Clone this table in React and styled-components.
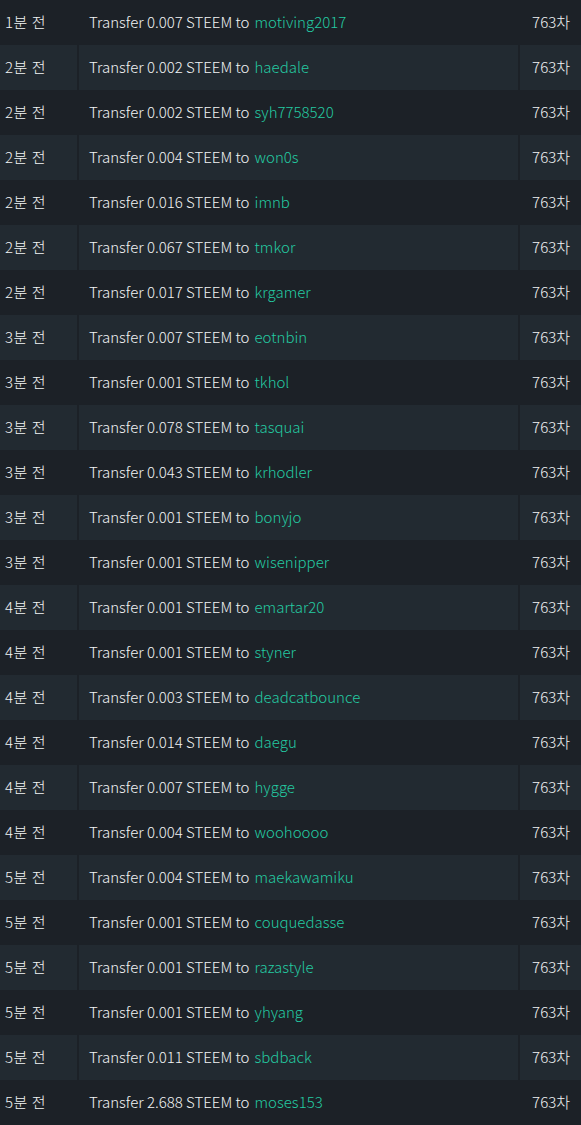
import React from "react";
import styled, { createGlobalStyle } from "styled-components";

const GlobalStyle = createGlobalStyle`
  body {
    margin: 0;
    background: #1c2127;
    font-family: "Noto Sans CJK KR", "Noto Sans", sans-serif;
  }
`;

const Table = styled.div`
  width: 581px;
  display: flex;
  flex-direction: column;
`;

const Row = styled.div`
  display: grid;
  grid-template-columns: 79px 441px 61px;
  height: 45px;
  background: ${(p) => (p.$alt ? "#222a31" : "#1c2127")};
`;

const Cell = styled.div`
  display: flex;
  align-items: center;
  font-size: 15px;
  font-weight: 300;
  letter-spacing: ${(p) => p.$spacing || "0"};
  color: #f2f4f5;
  white-space: nowrap;
  overflow: hidden;
  padding: 0 ${(p) => p.$pad || "10px"};
  padding-bottom: 2px;
  justify-content: ${(p) => (p.$right ? "flex-end" : "flex-start")};
  border-right: ${(p) => (p.$last ? "none" : "2px solid #1c2127")};
`;

const Name = styled.span`
  color: #24caa2;
  margin-left: 5px;
`;

const rows = [
  ["1분 전", "0.007", "motiving2017"],
  ["2분 전", "0.002", "haedale"],
  ["2분 전", "0.002", "syh7758520"],
  ["2분 전", "0.004", "won0s"],
  ["2분 전", "0.016", "imnb"],
  ["2분 전", "0.067", "tmkor"],
  ["2분 전", "0.017", "krgamer"],
  ["3분 전", "0.007", "eotnbin"],
  ["3분 전", "0.001", "tkhol"],
  ["3분 전", "0.078", "tasquai"],
  ["3분 전", "0.043", "krhodler"],
  ["3분 전", "0.001", "bonyjo"],
  ["3분 전", "0.001", "wisenipper"],
  ["4분 전", "0.001", "emartar20"],
  ["4분 전", "0.001", "styner"],
  ["4분 전", "0.003", "deadcatbounce"],
  ["4분 전", "0.014", "daegu"],
  ["4분 전", "0.007", "hygge"],
  ["4분 전", "0.004", "woohoooo"],
  ["5분 전", "0.004", "maekawamiku"],
  ["5분 전", "0.001", "couquedasse"],
  ["5분 전", "0.001", "razastyle"],
  ["5분 전", "0.001", "yhyang"],
  ["5분 전", "0.011", "sbdback"],
  ["5분 전", "2.688", "moses153"],
];

const App = () => (
  <>
    <GlobalStyle />
    <Table>
      {rows.map(([time, amount, name], i) => (
        <Row key={i} $alt={i % 2 === 1}>
          <Cell $pad="5px" $spacing="0.5px">
            {time}
          </Cell>
          <Cell>
            Transfer {amount} STEEM to<Name>{name}</Name>
          </Cell>
          <Cell $right $last $pad="11px">
            763차
          </Cell>
        </Row>
      ))}
    </Table>
  </>
);

export default App;
